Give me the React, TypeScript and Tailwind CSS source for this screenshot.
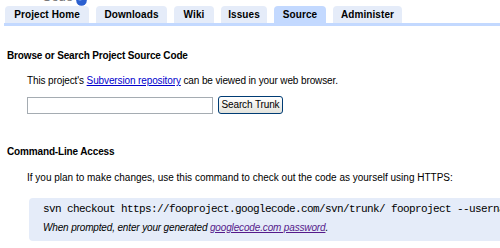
const tabs = [
  { label: "Project Home", w: "w-[84px]" },
  { label: "Downloads", w: "w-[71px]" },
  { label: "Wiki", w: "w-[40px]" },
  { label: "Issues", w: "w-[46px]" },
  { label: "Source", w: "w-[52px]", active: true },
  { label: "Administer", w: "w-[69px]" },
];

function Globe() {
  return (
    <svg width="11" height="11" viewBox="0 0 11 11" className="mt-[-5px] shrink-0">
      <circle cx="5.5" cy="5.5" r="5.3" fill="#2a5fd0" />
      <circle cx="4" cy="3.5" r="2.2" fill="#7fa8f0" opacity="0.8" />
    </svg>
  );
}

export default function App() {
  return (
    <div className="w-[500px] h-[248px] overflow-hidden bg-white text-black font-['Liberation_Sans',Arial,sans-serif]">
      {/* logo strip, mostly scrolled off */}
      <div className="h-[6px] overflow-hidden flex items-start pl-[42px] gap-[3px]">
        <span className="mt-[-10px] text-[13px] leading-none text-[#777]">Code</span>
        <Globe />
      </div>

      {/* tabs */}
      <div className="flex items-end gap-[7px] pl-[5px] h-[17px]">
        {tabs.map((t) => (
          <div
            key={t.label}
            className={`${t.w} h-[17px] rounded-t-[4px] flex items-center justify-center text-[10px] font-bold tracking-[0.1px] ${
              t.active ? "bg-[#c3d9ff]" : "bg-[#e5ecf9]"
            }`}
          >
            {t.label}
          </div>
        ))}
      </div>
      <div className="ml-[4px] h-[3px] bg-[#c3d9ff]" />

      <div className="pl-[7px]">
        <h2 className="mt-[23px] text-[10px] font-bold leading-[13px] tracking-[-0.15px]">
          Browse or Search Project Source Code
        </h2>
        <div className="pl-[20px] text-[10px] tracking-[-0.12px]">
          <p className="mt-[12px] leading-[13px]">
            This project's{" "}
            <a href="#" className="text-[#0000cc] underline">
              Subversion repository
            </a>{" "}
            can be viewed in your web browser.
          </p>
          <div className="mt-[9px] flex items-center gap-[5px]">
            <input
              type="text"
              className="w-[186px] h-[17px] border border-[#a5acb2] bg-white outline-none"
            />
            <button className="h-[18px] w-[65px] px-0 rounded-[3px] border border-[#003c74] bg-gradient-to-b from-white to-[#e3e3dc] text-[10px] leading-none whitespace-nowrap">
              Search Trunk
            </button>
          </div>
        </div>

        <h2 className="mt-[31px] text-[10px] font-bold leading-[13px] tracking-[-0.15px]">
          Command-Line Access
        </h2>
        <div className="pl-[20px] text-[10px]">
          <p className="mt-[13px] leading-[13px] whitespace-nowrap">
            If you plan to make changes, use this command to check out the code as yourself using HTTPS:
          </p>
          <div className="mt-[14px] ml-[2px] h-[43px] rounded-l-[4px] bg-[#e5ecf9] pl-[14px] pt-[3px] whitespace-nowrap">
            <div className="font-['Liberation_Mono','Courier_New',monospace] text-[11px] tracking-[-0.6px] leading-[16px]">
              svn checkout https://fooproject.googlecode.com/svn/trunk/ fooproject --username
            </div>
            <div className="mt-[4px] text-[10px] italic leading-[13px] tracking-[-0.15px]">
              When prompted, enter your generated{" "}
              <a href="#" className="text-[#551a8b] underline">
                googlecode.com password
              </a>
              .
            </div>
          </div>
        </div>
      </div>
    </div>
  );
}
